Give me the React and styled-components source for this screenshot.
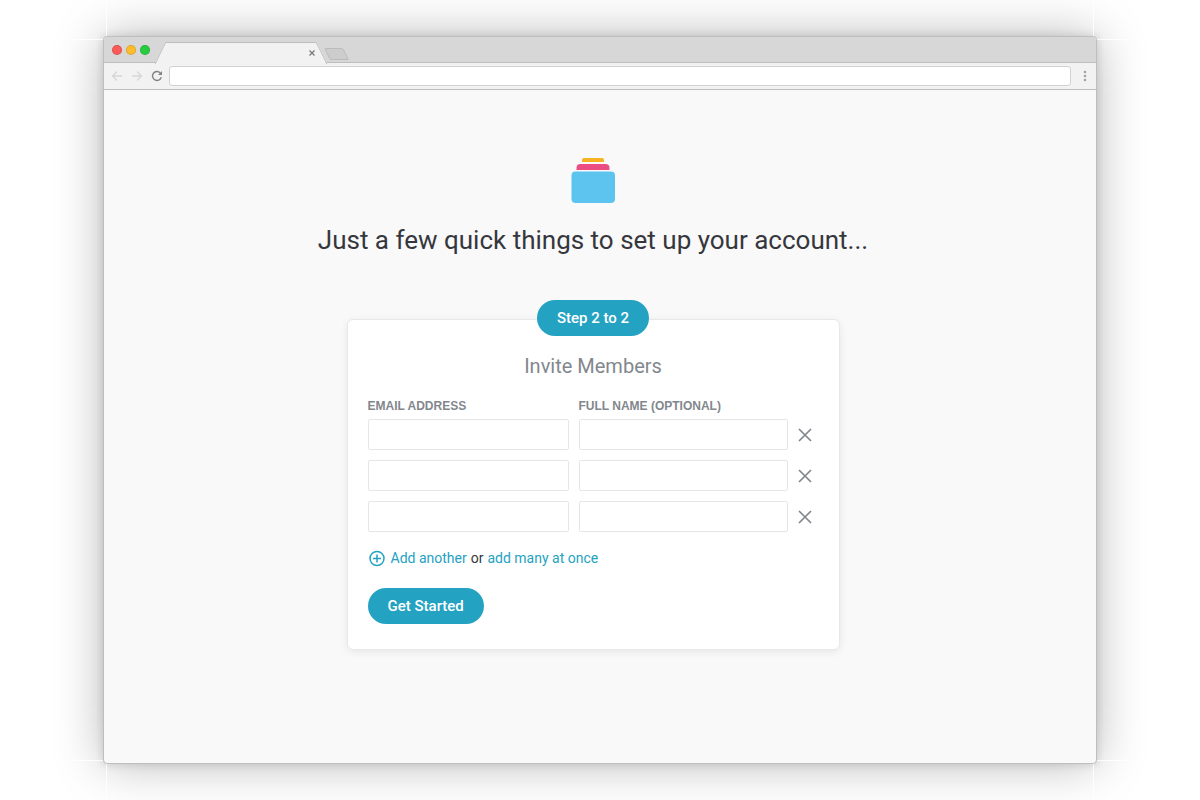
import styled, { createGlobalStyle } from "styled-components";
import { useState } from "react";

const GlobalStyle = createGlobalStyle`
* {
  box-sizing : border-box;
}
body {
  margin : 0;
  background-color : #ffffff;
  color : #36373d;
  font-family : Roboto, "Liberation Sans", sans-serif;
}
button, input {
  font-family : inherit;
}
`

const StyledDesktop = styled.div`
min-height : 100vh;
padding : 36px 103px;
display : flex;
overflow : hidden;
`

const StyledBrowser = styled.div`
position : relative;
flex : 1;
display : flex;
flex-direction : column;
border : 1px solid #bebebe;
border-radius : 4px;
background-color : #f9f9f9;
box-shadow : 0 0 50px rgba(0, 0, 0, 0.28), 0 0 10px rgba(0, 0, 0, 0.14);
`

// thin light seams where the window shadow is cut at the corners
const StyledSeam = styled.span`
position : absolute;
background-color : rgba(255, 255, 255, 0.8);
${({ $vertical }) => ($vertical ? "width : 1px; height : 36px;" : "width : 34px; height : 1px;")}
${({ $y, $vertical }) => `${$y} : ${$vertical ? "-37px" : "2px"};`}
${({ $x, $vertical }) => `${$x} : ${$vertical ? "2px" : "-35px"};`}
`

const StyledTabBar = styled.div`
display : flex;
align-items : flex-end;
height : 26px;
padding-left : 8px;
background-color : #d7d7d7;
border-bottom : 1px solid #bebebe;
border-radius : 3px 3px 0 0;
`

const StyledLights = styled.div`
display : flex;
gap : 4px;
padding-bottom : 7px;
`

const StyledLight = styled.button`
width : 10px;
height : 10px;
padding : 0;
border : 1px solid rgba(0, 0, 0, 0.12);
border-radius : 50%;
background-color : ${({ $color }) => $color};
`

const StyledTab = styled.div`
position : relative;
display : flex;
align-items : center;
justify-content : flex-end;
width : 172px;
height : 21px;
margin : 0 0 -1px 5px;
padding-right : 12px;

&::before, &::after {
  content : "";
  position : absolute;
  top : 0;
  height : 21px;
  width : 120px;
  background-color : #f2f2f2;
  border : 1px solid #bebebe;
  border-bottom : none;
}

&::before {
  left : 5px;
  border-right : none;
  border-radius : 2px 0 0 0;
  transform : skewX(-26deg);
}

&::after {
  right : 5px;
  border-left : none;
  border-radius : 0 2px 0 0;
  transform : skewX(26deg);
}
`

const StyledTabClose = styled.button`
position : relative;
z-index : 1;
display : flex;
padding : 0;
border : none;
background : none;
`

const StyledNewTab = styled.button`
width : 19px;
height : 12px;
margin : 0 0 2px;
padding : 0;
border : 1px solid #bbbbbb;
border-radius : 2px;
background-color : #cdcdcd;
transform : skewX(26deg);
`

const StyledToolbar = styled.div`
display : flex;
align-items : center;
height : 27px;
padding : 0 8px 0 7px;
background-color : #f2f2f2;
border-bottom : 1px solid #bebebe;
`

const StyledNavButton = styled.button`
display : flex;
align-items : center;
justify-content : center;
width : 20px;
height : 20px;
padding : 0;
border : none;
background : none;
`

const StyledNav = styled.div`
display : flex;
width : 58px;

${StyledNavButton} {
  padding-right : 8px;
}
`

const StyledAddress = styled.input`
flex : 1;
min-width : 0;
height : 20px;
padding : 0 8px;
border : 1px solid #d2d2d2;
border-radius : 3px;
background-color : #ffffff;
`

const StyledMenuButton = styled(StyledNavButton)`
width : 12px;
margin-left : 8px;
margin-right : -3px;
`

const StyledMain = styled.main`
flex : 1;
display : flex;
flex-direction : column;
align-items : center;
padding : 66px 34px 40px 20px;
`

const StyledTitle = styled.h1`
margin : 20px 0 63px;
font-size : 26px;
line-height : 32px;
font-weight : 400;
text-align : center;
`

const StyledCard = styled.form`
display : flex;
flex-direction : column;
align-items : flex-start;
width : 100%;
max-width : 493px;
padding : 0 20px 25px;
background-color : #ffffff;
border : 1px solid #e6e9ea;
border-radius : 6px;
box-shadow : 0 2px 8px rgba(0, 0, 0, 0.08);
`

const StyledStep = styled.span`
align-self : center;
margin-top : -20px;
padding : 0 20px;
border-radius : 18px;
background-color : #24a2c2;
color : #ffffff;
font-size : 15px;
line-height : 36px;
font-weight : 500;
`

const StyledSubtitle = styled.h2`
align-self : center;
margin : 18px 0 20px;
color : #82878d;
font-size : 20px;
line-height : 24px;
font-weight : 400;
`

const StyledMembers = styled.div`
display : grid;
grid-template-columns : 201fr 209fr 21px;
gap : 10px;
width : 100%;
`

const StyledLabel = styled.label`
margin-bottom : -5px;
color : #82878d;
font-family : "Liberation Sans", sans-serif;
font-size : 12px;
line-height : 16px;
font-weight : 700;
text-transform : uppercase;
`

const StyledInput = styled.input`
width : 100%;
min-width : 0;
height : 31px;
padding : 0 8px;
border : 1px solid #e4e7e9;
border-radius : 2px;
background-color : #ffffff;
font-size : 14px;
`

const StyledRemove = styled.button`
display : flex;
align-items : center;
padding : 0;
border : none;
background : none;
color : #82878d;
cursor : pointer;
`

const StyledAddLine = styled.div`
display : flex;
align-items : center;
gap : 4px;
margin : 16px 0 20px;
font-size : 14px;
line-height : 20px;
`

const StyledLink = styled.a`
display : flex;
align-items : center;
gap : 6px;
color : #24a2c2;
text-decoration : none;
`

const StyledSubmit = styled.button`
height : 36px;
padding : 0 20px;
border : none;
border-radius : 18px;
background-color : #24a2c2;
color : #ffffff;
font-size : 15px;
font-weight : 500;
cursor : pointer;
`

function Logo () {
  return (
    <svg width="44" height="48" viewBox="0 0 44 48" aria-hidden="true">
      <path d="M11 6V4Q11 2 13 2H31Q33 2 33 4V6Z" fill="#f5b324" />
      <path d="M5.5 14V12Q5.5 8 9.5 8H34.5Q38.5 8 38.5 12V14Z" fill="#eb4c82" />
      <rect x="0.5" y="15.5" width="43.5" height="31.5" rx="4" fill="#5dc4ef" />
    </svg>
  );
}

function BrowserTop () {
  return (
    <>
      <StyledTabBar>
        <StyledLights>
          <StyledLight type="button" aria-label="Close" $color="#fc5b57" />
          <StyledLight type="button" aria-label="Minimize" $color="#fdbc2e" />
          <StyledLight type="button" aria-label="Zoom" $color="#28cc41" />
        </StyledLights>
        <StyledTab>
          <StyledTabClose type="button" aria-label="Close tab">
            <svg width="6" height="6" viewBox="0 0 6 6" stroke="#777777" strokeWidth="1.2">
              <path d="M.5 .5L5.5 5.5M5.5 .5L.5 5.5" />
            </svg>
          </StyledTabClose>
        </StyledTab>
        <StyledNewTab type="button" aria-label="New tab" />
      </StyledTabBar>
      <StyledToolbar>
        <StyledNav>
          <StyledNavButton type="button" aria-label="Back">
            <svg width="12" height="12" viewBox="0 0 12 12" fill="none" stroke="#d6d6d6" strokeWidth="1.3">
              <path d="M11 6H1.5M6 1.5L1.5 6L6 10.5" />
            </svg>
          </StyledNavButton>
          <StyledNavButton type="button" aria-label="Forward">
            <svg width="12" height="12" viewBox="0 0 12 12" fill="none" stroke="#d6d6d6" strokeWidth="1.3">
              <path d="M1 6H10.5M6 1.5L10.5 6L6 10.5" />
            </svg>
          </StyledNavButton>
          <StyledNavButton type="button" aria-label="Reload">
            <svg width="12" height="12" viewBox="0 0 12 12" fill="none" stroke="#808386" strokeWidth="1.4">
              <path d="M10.3 7.3A4.5 4.5 0 1 1 9.3 2.9" />
              <path d="M11 1V5H7Z" fill="#808386" stroke="none" />
            </svg>
          </StyledNavButton>
        </StyledNav>
        <StyledAddress type="text" aria-label="Address" />
        <StyledMenuButton type="button" aria-label="Menu">
          <svg width="4" height="12" viewBox="0 0 4 12" fill="#a2a2a2">
            <circle cx="2" cy="2" r="1.3" />
            <circle cx="2" cy="6" r="1.3" />
            <circle cx="2" cy="10" r="1.3" />
          </svg>
        </StyledMenuButton>
      </StyledToolbar>
    </>
  );
}

function MemberRow ({ id, onRemove }) {
  return (
    <>
      <StyledInput id={`email-${id}`} type="email" aria-label="Email address" />
      <StyledInput id={`name-${id}`} type="text" aria-label="Full name (optional)" />
      <StyledRemove type="button" aria-label="Remove member" onClick={() => onRemove(id)}>
        <svg width="14" height="14" viewBox="0 0 14 14" stroke="currentColor" strokeWidth="1.7">
          <path d="M1 1L13 13M13 1L1 13" />
        </svg>
      </StyledRemove>
    </>
  );
}

function InviteForm () {
  const [members, setMembers] = useState([1, 2, 3]);

  const handleAdd = function (e) {
    e.preventDefault();
    setMembers([...members, Math.max(0, ...members) + 1]);
  };

  const handleRemove = function (id) {
    setMembers(members.filter((member) => member !== id));
  };

  return (
    <StyledCard onSubmit={(e) => e.preventDefault()}>
      <StyledStep>Step 2 to 2</StyledStep>
      <StyledSubtitle>Invite Members</StyledSubtitle>
      <StyledMembers>
        <StyledLabel htmlFor={`email-${members[0]}`}>Email address</StyledLabel>
        <StyledLabel htmlFor={`name-${members[0]}`}>Full name (optional)</StyledLabel>
        <span />
        {members.map((id) => (
          <MemberRow key={id} id={id} onRemove={handleRemove} />
        ))}
      </StyledMembers>
      <StyledAddLine>
        <StyledLink href="#add" onClick={handleAdd}>
          <svg width="17" height="17" viewBox="0 0 17 17" fill="none" stroke="currentColor" strokeWidth="1.5">
            <circle cx="9" cy="8.5" r="7" />
            <path d="M9 4.5V12.5M5 8.5H13" />
          </svg>
          Add another
        </StyledLink>
        <span>or</span>
        <StyledLink href="#many">add many at once</StyledLink>
      </StyledAddLine>
      <StyledSubmit type="submit">Get Started</StyledSubmit>
    </StyledCard>
  );
}

function App () {
  return (
    <StyledDesktop>
      <GlobalStyle />
      <StyledBrowser>
        {["top", "bottom"].map((y) => ["left", "right"].map((x) => [
          <StyledSeam key={`${y}-${x}-v`} $y={y} $x={x} $vertical />,
          <StyledSeam key={`${y}-${x}-h`} $y={y} $x={x} />
        ]))}
        <BrowserTop />
        <StyledMain>
          <Logo />
          <StyledTitle>Just a few quick things to set up your account...</StyledTitle>
          <InviteForm />
        </StyledMain>
      </StyledBrowser>
    </StyledDesktop>
  );
}
export default App;
